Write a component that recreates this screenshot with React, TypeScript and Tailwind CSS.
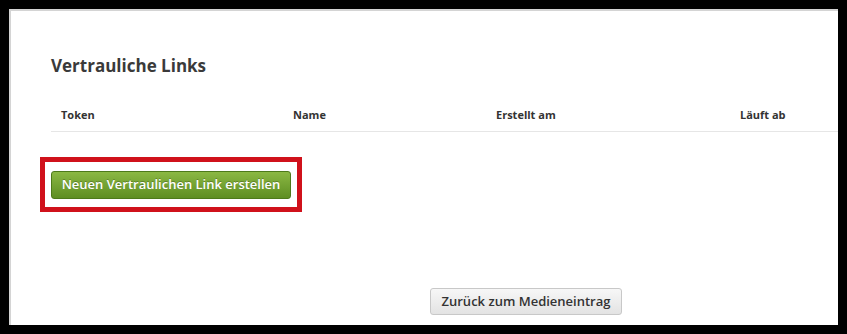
export default function App() {
  return (
    <div className="w-[847px] h-[334px] bg-black pt-[9px] pl-[9px] overflow-hidden" style={{ fontFamily: '"Open Sans", sans-serif' }}>
      <div className="w-[829px] h-[316px] bg-white border-l-2 border-t-2 border-[#d4d4d4] pl-[40px] overflow-hidden flex flex-col">
        <h1 className="mt-[43px] text-[17px] leading-[24px] font-bold text-[#3a3a3a]">Vertrauliche Links</h1>
        <div className="mt-[22px] w-[800px] border-b border-[#e6e6e6] h-[32px] flex items-center text-[11px] font-bold text-[#333]">
          <div className="w-[232px] pl-[10px]">Token</div>
          <div className="w-[203px] pl-[10px]">Name</div>
          <div className="w-[244px] pl-[10px]">Erstellt am</div>
          <div className="pl-[10px]">Läuft ab</div>
        </div>
        <div className="mt-[25px] -ml-[11px] w-[262px] h-[55px] border-[5px] border-[#d0111b] flex items-center pl-[6px]">
          <button className="h-[28px] w-[240px] rounded-[3px] border border-[#4d7a1a] bg-gradient-to-b from-[#8bb843] to-[#5e8e22] text-white text-[13px] font-semibold leading-none" style={{ textShadow: '0 -1px 0 rgba(0,0,0,0.25)' }}>
            Neuen Vertraulichen Link erstellen
          </button>
        </div>
        <div className="mt-[76px] pl-[379px]">
          <button className="h-[27px] w-[192px] rounded-[3px] border border-[#c8c8c8] bg-gradient-to-b from-[#f7f7f7] to-[#e3e3e3] text-[#333] text-[13px] font-semibold leading-none">
            Zurück zum Medieneintrag
          </button>
        </div>
      </div>
    </div>
  );
}
